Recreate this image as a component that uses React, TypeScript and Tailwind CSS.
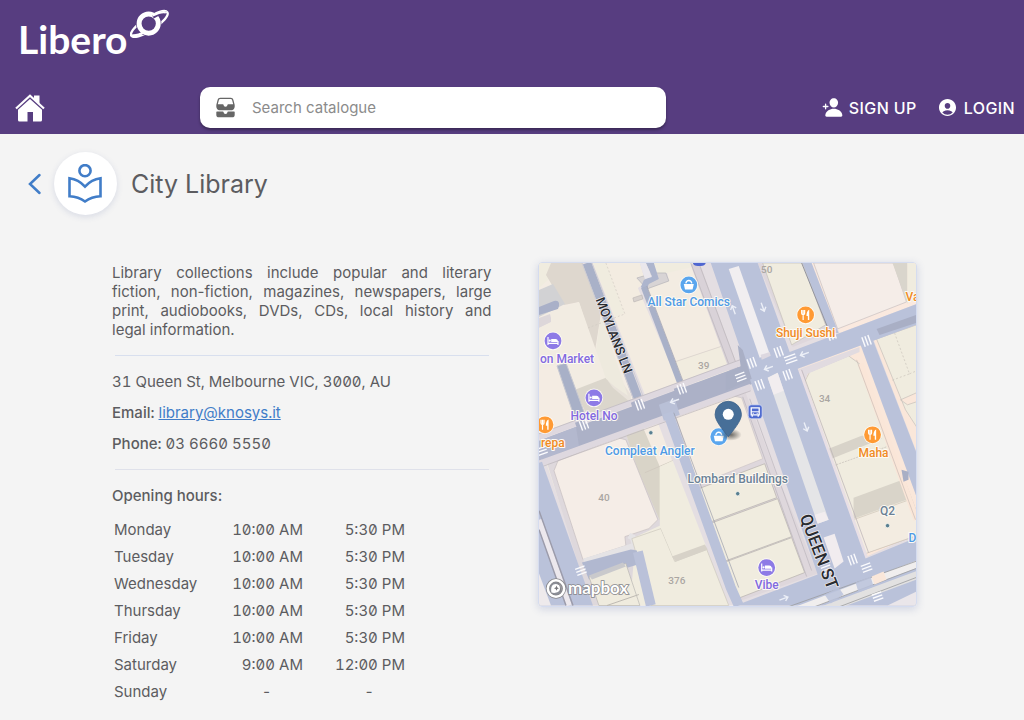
import type { ReactNode } from "react";
import { IoFileTrayStacked, IoPersonAdd, IoPersonCircle } from "react-icons/io5";

const hours: [string, string, string][] = [
  ["Monday", "10:00 AM", "5:30 PM"],
  ["Tuesday", "10:00 AM", "5:30 PM"],
  ["Wednesday", "10:00 AM", "5:30 PM"],
  ["Thursday", "10:00 AM", "5:30 PM"],
  ["Friday", "10:00 AM", "5:30 PM"],
  ["Saturday", "9:00 AM", "12:00 PM"],
  ["Sunday", "-", "-"],
];

function Logo() {
  return (
    <a href="#home" aria-label="Libero" className="flex w-fit items-start gap-[2px] text-white">
      <span className="pt-4 font-['Lato',sans-serif] text-[39px] font-bold leading-[46px]">Libero</span>
      <svg viewBox="130 9 40 29" className="mt-[9px] h-[29px] w-10" fill="none" stroke="white">
        <ellipse cx="149.300" cy="24" rx="21.500" ry="6.500" strokeWidth="2.400" transform="rotate(-33 149.300 24)" />
        <circle cx="148.700" cy="23.600" r="9.800" fill="#573d80" stroke="#573d80" strokeWidth="5.800" />
        <circle cx="148.700" cy="23.600" r="9.600" strokeWidth="4.900" />
        <path d="M153 17C158.500 14 163 12.300 166 12.700" stroke="#573d80" strokeWidth="3.400" />
        <path d="M152.500 15.500C158 12.800 163 11.400 166 12.400" strokeWidth="2.200" />
        <path d="M145 31.800C139.500 34.600 135 35.900 132 35.300" strokeWidth="2.200" />
      </svg>
    </a>
  );
}

function HomeIcon() {
  return (
    <svg viewBox="0 0 30 28" className="h-7 w-[30px]">
      <path d="M1 14.500L15 1.800L29 14.500" fill="none" stroke="white" strokeWidth="2.200" />
      <path d="M19 1.500H24.500V10L19 5.500Z" fill="white" />
      <path d="M15 5L27 15.800V26Q27 27.500 25.500 27.500H18V18H12.500V27.500H4.500Q3 27.500 3 26V15.800Z" fill="white" />
    </svg>
  );
}

function LibraryIcon() {
  return (
    <svg viewBox="0 0 34 40" className="h-10 w-[34px]" fill="none" stroke="#417dc8" strokeWidth="2.600">
      <circle cx="17" cy="6.700" r="5.600" />
      <path d="M1.500 14.300Q10.500 15.500 17 22.600Q23.500 15.500 32.500 14.300V32.300Q23.500 32.700 17 37.500Q10.500 32.700 1.500 32.300Z" />
    </svg>
  );
}

function Crossing({ x, y, angle = 20, length = 10 }: { x: number; y: number; angle?: number; length?: number }) {
  return (
    <g transform={`translate(${x} ${y}) rotate(${-angle})`} stroke="#fbfbfd" strokeWidth="1.400">
      {[-3.2, 0, 3.2].map((d) => (
        <path key={d} d={`M${d} ${-length / 2}V${length / 2}`} />
      ))}
    </g>
  );
}

function Arrow({ x, y, angle }: { x: number; y: number; angle: number }) {
  return (
    <path
      transform={`translate(${x} ${y}) rotate(${angle})`}
      d="M-4.500 0H4M1 -3L4.500 0L1 3"
      fill="none"
      stroke="#eceff7"
      strokeWidth="1.400"
    />
  );
}

type Kind = "bed" | "food" | "shop";
const kindColor: Record<Kind, string> = { bed: "#8d7ae6", food: "#ff9a33", shop: "#5aa6ee" };

function Poi({ x, y, kind }: { x: number; y: number; kind: Kind }) {
  const glyphs: Record<Kind, ReactNode> = {
    bed: (
      <>
        <path d="M-5 -4V4M-5 2.500H5M5 4V0" fill="none" stroke="white" strokeWidth="1.200" />
        <path d="M-1.800 1.200V-2H2.500Q5 -2 5 1.200Z" fill="white" />
        <circle cx="-3.200" cy="-0.300" r="1.100" fill="white" />
      </>
    ),
    food: (
      <>
        <path d="M-4 -5V-1.800Q-4 -0.300 -2.500 -0.300Q-1 -0.300 -1 -1.800V-5M-2.500 -5V5" fill="none" stroke="white" strokeWidth="1.200" />
        <path d="M3.600 5H2.200V1H0.800Q0.800 -4 3.600 -5.200Z" fill="white" />
      </>
    ),
    shop: (
      <>
        <path d="M-5 -1H5L3.800 4.500H-3.800Z" fill="white" />
        <path d="M-3 -1.500Q-2.500 -4.500 0 -4.500Q2.500 -4.500 3 -1.500" fill="none" stroke="white" strokeWidth="1.300" />
      </>
    ),
  };
  return (
    <g transform={`translate(${x} ${y})`}>
      <circle r="9.300" fill="#fffdf8" opacity="0.850" />
      <circle r="8.400" fill={kindColor[kind]} />
      {glyphs[kind]}
    </g>
  );
}

function Label({ x, y, color, children, start = false }: { x: number; y: number; color: string; children: string; start?: boolean }) {
  return (
    <text x={x} y={y} fill={color} textAnchor={start ? "start" : "middle"} stroke="#fdfaf4" strokeWidth="2" strokeLinejoin="round" paintOrder="stroke" fontSize="12" fontWeight="500">
      {children}
    </text>
  );
}

function StreetMap() {
  return (
    <svg viewBox="538 263 378 343" role="img" aria-label="Map of 31 Queen Street" className="block w-full font-['Roboto',sans-serif]">
      <defs>
        <radialGradient id="pinShade">
          <stop offset="0" stopColor="#30302e" stopOpacity="0.700" />
          <stop offset="1" stopColor="#30302e" stopOpacity="0" />
        </radialGradient>
      </defs>
      <rect x="538" y="263" width="378" height="343" fill="#e4dee2" />

      {/* north-west block */}
      <path d="M538 263H582L633 403L538 437Z" fill="#f3ece3" />
      <path d="M538 263H550L547 280L538 288Z" fill="#f0ecdf" />
      <path d="M550 263H582L600 314L594 351L578 302L563 305L545 275Z" fill="#ded7ce" />
      <path d="M538 290L552 284L564 304L538 317Z" fill="#d2d2d4" />
      <path d="M538 307L553 301Q559 300 558 306L557 309L538 315Z" fill="#a9b0c8" />
      <path d="M538 318L549 314L551 322L538 328Z" fill="#ddd7da" />
      <path d="M578 302L595 350L605 379L574 390L562 365L538 369V328L550 322V312Z" fill="#f2ece2" />
      <path d="M574 390L605 378L633 403L588 420Z" fill="#dbd6cc" />
      <path d="M607 381Q616 377 621 382L630 395V403L612 388Z" fill="#e8e2da" />
      <path d="M605 379L614 387L627 396L600 315L595 350Z" fill="#eeeade" />
      <path d="M538 370L557 364L574 425L550 434L538 430Z" fill="#f4ece3" />
      <path d="M556 366L565 363L586 420L576 425Z" fill="#a8b0c7" stroke="#c8c9d1" />

      {/* north block between the lanes */}
      <path d="M592 263H639L645 283L637 288L679 387L646 400Z" fill="#f3ece1" />
      <path d="M592 263H605L623 313L614 317Z" fill="#f0ecdf" />
      <path d="M605 263L624 314L587 328" fill="none" stroke="#d2ccc4" strokeWidth="0.700" strokeDasharray="2 2" />
      <path d="M610 314L615 324L613 330L609 318Z" fill="#d6d1cd" />
      <path d="M653 263H694L735 378L684 384L645 287L668 280L666 272L657 275Z" fill="#f3ece2" />
      <path d="M653 263H694L696 266L657 275Z" fill="#f0ecdf" />
      <path d="M674 362L725 345L735 365L682 386Z" fill="#f1ecdf" stroke="#d5cdc8" strokeWidth="0.700" />
      <path d="M636 278L653 273L665 273L668 281L646 289Z" fill="#d8d4d5" stroke="#b5b4b9" strokeWidth="0.700" />
      <path d="M632 298L641 295L642 299L633 302Z" fill="#d8d2ce" stroke="#b9b3b2" strokeWidth="0.600" />
      <path d="M645 263H653L658 279L648 284L645 291L640 287L643 280L651 276Z" fill="#adb5cd" />
      <path d="M639 263H645L651 277L644 279Z" fill="#eae7ec" />
      <path d="M643 287L682 390" stroke="#a9b1c8" strokeWidth="6" />
      <path d="M646 286L684 386" stroke="#9d9faf" strokeWidth="0.700" />
      <path d="M586 263L639 404" stroke="#a9b1c8" strokeWidth="9" />
      <path d="M581 263L634 403M591 263L644 401" stroke="#cfcdd3" strokeWidth="1" />
      <path d="M694 263L734 372" stroke="#d9d2d8" strokeWidth="9" />
      <path d="M690 263L728 364M698 263L737 368" stroke="#bbb5ba" strokeWidth="0.700" />

      {/* central block and the ones to its west */}
      <path d="M545 462L624 437L659 430L727 606H592Z" fill="#f0ecdf" />
      <path d="M546 463L625 435L639 464L661 525L635 537L629 606H590Z" fill="#ded8dc" />
      <path d="M624 431L641 425L659 462V521L637 470Z" fill="#d9d4c8" />
      <path d="M641 425L656 420L671 460L659 467Z" fill="#f4ece2" />
      <path d="M644 473L672 461" stroke="#cfc8be" strokeWidth="0.800" />
      <path d="M557 461L617 438L625 440L637 470L657 520L648 529L624 537L625 546L582 560L553 471Z" fill="#f5ede7" stroke="#cac3c4" strokeWidth="0.800" />
      <path d="M583 562L634 546L632 538L628 536" fill="none" stroke="#e5e3e5" strokeWidth="6" />
      <path d="M631 539L660 529L674 562L706 550L728 606H650Z" fill="#f0ecdf" stroke="#cdc8be" strokeWidth="0.700" />
      <path d="M659 467L672 461L705 546L672 557L659 526Z" fill="#f0ecdf" />
      <path d="M671 557L704 545L707 550L675 562Z" fill="#d7d2c8" />
      <path d="M581 563L630 550L636 551L637 565L588 580Z" fill="#b1b8d0" />
      <path d="M637 552L650 606" stroke="#bac1d9" strokeWidth="10" />
      <path d="M588 577L625 564L639 606H598Z" fill="#efebde" stroke="#bab7b3" strokeWidth="0.700" />
      <path d="M588 576L622 563L625 567L591 580Z" fill="#c9c9cc" />
      <path d="M606 606L638 595" stroke="#bdb9b2" />

      <path d="M675 414L743 388L769 457L817 574L735 603Z" fill="#ded7dc" />
      <path d="M675 417L732 396L741 398L762 459L697 485Z" fill="#f4ece2" stroke="#cdc5c7" strokeWidth="0.700" />
      <path d="M698 489L764 464L776 498L708 523Z" fill="#f0ecdf" stroke="#bcb7b2" strokeWidth="0.800" />
      <path d="M709 524L777 499L791 537L723 562Z" fill="#f0ecdf" stroke="#bcb7b2" strokeWidth="0.800" />
      <path d="M723 563L791 538L804 573L737 599Z" fill="#f0ecdf" stroke="#bcb7b2" strokeWidth="0.800" />
      <path d="M742 397L806 577M749 399L811 571" stroke="#bcb5bd" strokeWidth="0.700" />

      {/* east blocks */}
      <path d="M757 263H804L833 331L792 347Z" fill="#ded7dc" />
      <path d="M762 263H802L825 325L791 345Z" fill="#f0ecdf" stroke="#c4bfb9" strokeWidth="0.700" />
      <path d="M809 263H916V304L839 333Z" fill="#fae9df" />
      <path d="M813 263H893L906 302L837 329Z" fill="#f5ede8" stroke="#c8c0bf" strokeWidth="0.700" />
      <path d="M892 263H907V304Z" fill="#d9d5cc" />
      <path d="M907 263H916V300L907 303Z" fill="#f0ecdf" />
      <path d="M796 370L861 345L895 435L927 529L864 558Z" fill="#fae7da" />
      <path d="M804 382L864 554L916 536V512L881 420L859 364L848 356L809 372Z" fill="#f0ecdf" stroke="#c4beb8" strokeWidth="0.700" />
      <path d="M797 370L859 347V352L807 374L804 382Z" fill="#e1dbe0" />
      <path d="M828 449L861 436L879 436L881 439L831 459Z" fill="#d8d3c9" />
      <path d="M833 466L889 446" stroke="#cac4bc" strokeWidth="0.800" strokeDasharray="2 1" />
      <path d="M853 498L902 480L909 499L853 519Z" fill="#d9d4c9" />
      <path d="M853 520L909 500L916 519V536L865 554Z" fill="#f3ece1" stroke="#cfc5b8" strokeWidth="0.700" />
      <path d="M798 371L865 558" stroke="#e8dfe5" strokeWidth="5" />
      <path d="M801 370L868 553" stroke="#b8b0b5" strokeWidth="0.700" />
      <path d="M860 364L916 520" stroke="#fae6d8" strokeWidth="6" />
      <path d="M856 360L915 520" stroke="#c9bdb6" strokeWidth="0.700" />
      <path d="M872 337L916 321V452Z" fill="#fae7da" />
      <path d="M876 339L916 325V393L900 400L907 405L916 402V427L905 410Z" fill="#f0ecdf" stroke="#c5bfba" strokeWidth="0.700" />
      <path d="M894 333L909 374L890 381M909 374L916 371" fill="none" stroke="#cac4bc" strokeWidth="0.700" strokeDasharray="2 2" />
      <path d="M802 263H811L838 333H829Z" fill="#bac2da" />
      <path d="M801 263L828 330" stroke="#92949f" strokeWidth="1" />

      {/* streets */}
      <path d="M541 440L752 362V384L541 461Z" fill="#acb1c7" />
      <path d="M538 441L575 427L578 446L538 461Z" fill="#b3b8ce" />
      <path d="M538 437L750 359M538 464L750 387" fill="none" stroke="#ded8df" strokeWidth="6" />
      <path d="M538 434L750 356M538 468L750 391" fill="none" stroke="#bcb6bc" strokeWidth="0.700" />
      <path d="M630 403L639 399L643 409L633 413ZM673 389L681 386L684 393L675 397ZM574 423L583 420L586 431L578 434Z" fill="#acb1c7" />
      <path d="M658 405L674 399L679 415L663 421Z" fill="#b9c0d7" />
      <path d="M667 413L730 588L738 606" fill="none" stroke="#bac2da" strokeWidth="10" />
      <path d="M673 413L738 588" stroke="#9c9fac" strokeWidth="0.700" />
      <path d="M710 263H757L789 352L916 304V325L797 369L865 559L916 538V606H735L817 575L750 382L740 350Z" fill="#bac2da" />
      <path d="M876 329L916 315V323L879 335Z" fill="#a9afc5" />
      <path d="M737 345L742 350L751 379L725 391V373L740 367Z" fill="#a9afc5" />
      <path d="M860 345L872 339L916 453V497Z" fill="#bac2da" />
      <path d="M901 470L908 472V480L903 482Z" fill="#a9afc5" />
      <path d="M538 463L541 462L592 606H538Z" fill="#bac2da" />
      <path d="M538 520L568 606" stroke="#ece8ed" strokeWidth="6" />
      <path d="M538 511L572 606M538 530L565 606" stroke="#9c9cab" strokeWidth="1.500" />
      <path d="M538 574L550 606H538Z" fill="#eeeaec" />

      {/* median strips and tram tracks */}
      <path d="M728 269L738 266L769 354L759 358Z" fill="#f1eef0" />
      <path d="M760 355L769 352L770 356L761 360Z" fill="#ddd8e0" />
      <path d="M767 378L777 373L828 520L817 524Z" fill="#e5e5e7" />
      <path d="M767 378L777 373L783 391L773 395ZM814 515L824 512L828 520L817 524Z" fill="#f2edef" />
      <path d="M823 538L834 534L843 562L834 569Z" fill="#f1ecef" />
      <path d="M779 617L926 561" stroke="#f0eeee" strokeWidth="7" />
      <path d="M805 617L926 572" stroke="#e2e1e1" strokeWidth="8" />
      <path d="M780 610L926 558M780 620L926 565M800 622L926 574" stroke="#9b9c9e" strokeWidth="0.800" />
      <path d="M824 595L838 588L843 595L830 604ZM855 583L870 577L873 587L858 593Z" fill="#bac2da" opacity="0.850" />
      <path d="M871 577L883 572L886 580L874 585Z" fill="#fae7da" />
      <path d="M887 606L916 592V606Z" fill="#eae6ea" />

      <Crossing x={639} y={405} />
      <Crossing x={681} y={389} />
      <Crossing x={583} y={425} />
      <Crossing x={751} y={363} />
      <Crossing x={778} y={352} />
      <Crossing x={759} y={385} />
      <Crossing x={787} y={375} />
      <Crossing x={866} y={341} />
      <Crossing x={831} y={335} />
      <Crossing x={790} y={359} angle={110} length={12} />
      <Crossing x={740} y={377} angle={110} />
      <Crossing x={852} y={560} />
      <Crossing x={866} y={568} angle={110} />
      <Crossing x={877} y={597} angle={110} />
      <Crossing x={580} y={571} angle={110} />
      <Crossing x={541} y={451} angle={110} />
      <Crossing x={826} y={570} angle={110} />
      <Arrow x={762} y={307} angle={70} />
      <Arrow x={733} y={310} angle={250} />
      <Arrow x={805} y={427} angle={70} />
      <Arrow x={804} y={354} angle={160} />
      <Arrow x={768} y={368} angle={160} />
      <Arrow x={674} y={401} angle={160} />
      <Arrow x={783} y={599} angle={-20} />

      {/* house numbers */}
      <g fill="#aaa6a2" fontSize="10" fontWeight="500" textAnchor="middle">
        <text x="766" y="273">50</text>
        <text x="703" y="369">39</text>
        <text x="824" y="402">34</text>
        <text x="603" y="501">40</text>
        <text x="676" y="584">376</text>
      </g>
      <path d="M692 263H705Q704 266 700 266H697Q693 266 692 263Z" fill="#4f66d0" />

      {/* street names */}
      <g fill="#292b30" stroke="#eceaed" strokeWidth="1.500" paintOrder="stroke" fontWeight="500" textAnchor="middle">
        <text transform="translate(609 337) rotate(69)" fontSize="13">MOYLANS LN</text>
        <text transform="translate(813 554) rotate(69)" fontSize="17">QUEEN ST</text>
      </g>

      {/* places */}
      <Poi x={688} y={285} kind="shop" />
      <Label x={688} y={306} color="#4f9be6">All Star Comics</Label>
      <Poi x={805} y={315} kind="food" />
      <Label x={805} y={337} color="#f08a24">Shuji Sushi</Label>
      <Poi x={552} y={341} kind="bed" />
      <Label x={539} y={363} color="#826ae0" start>on Market</Label>
      <Poi x={593} y={398} kind="bed" />
      <Label x={593} y={420} color="#826ae0">Hotel No</Label>
      <Poi x={544} y={425} kind="food" />
      <Label x={540} y={447} color="#f08a24" start>repa</Label>
      <Label x={905} y={301} color="#f08a24" start>Va</Label>
      <Poi x={872} y={435} kind="food" />
      <Label x={873} y={457} color="#f08a24">Maha</Label>
      <Poi x={766} y={568} kind="bed" />
      <Label x={766} y={589} color="#826ae0">Vibe</Label>
      <Label x={649} y={455} color="#4f9be6">Compleat Angler</Label>
      <Label x={737} y={483} color="#6b8196">Lombard Buildings</Label>
      <Label x={887} y={515} color="#6b8196">Q2</Label>
      <Label x={908} y={542} color="#4f9be6" start>D</Label>
      <g fill="#587f91" stroke="#f9f6ef" strokeWidth="0.800">
        <circle cx="650" cy="433" r="2.200" />
        <circle cx="737" cy="494" r="2.200" />
        <circle cx="887" cy="526" r="2.200" />
      </g>
      <g transform="translate(754.500 412)">
        <rect x="-7" y="-7" width="14" height="14" rx="3" fill="#4f6bd0" stroke="#dfe5f5" strokeWidth="0.700" />
        <path d="M-4 -4H4V3H-4ZM-3 3V5M3 3V5" fill="none" stroke="white" strokeWidth="1.300" />
        <path d="M-4 0H4M-2.500 1.600H-1.500M1.500 1.600H2.500" stroke="white" />
      </g>

      {/* location pin */}
      <Poi x={718} y={437} kind="shop" />
      <ellipse cx="730" cy="435" rx="11" ry="6" fill="url(#pinShade)" />
      <path d="M727.500 401.500A13.200 13.200 0 0 1 740.700 414.700C740.700 421 733 430 727.500 437C722 430 714.300 421 714.300 414.700A13.200 13.200 0 0 1 727.500 401.500Z" fill="#476f98" stroke="#3c628a" strokeWidth="0.800" />
      <circle cx="727.500" cy="414.500" r="5.500" fill="white" />

      {/* attribution */}
      <circle cx="555" cy="589" r="8.200" fill="#77777b" fillOpacity="0.700" stroke="#87878b" strokeWidth="4" />
      <circle cx="555" cy="589" r="8.200" stroke="white" strokeWidth="2.500" fill="none" />
      <path d="M550.500 593C549.500 588 551 584.500 555 584.500A4.300 4.300 0 0 1 559 589C559 593 554 594 550.500 593Z" fill="white" />
      <path d="M555.500 586L556.300 588L558 588.700L556.300 589.400L555.500 591.200L554.700 589.400L553 588.700L554.700 588Z" fill="#77777b" />
      <text x="567" y="594" fontSize="17" fontWeight="700" fontFamily="Lato, sans-serif" fill="white" stroke="#87878b" strokeWidth="1.600" paintOrder="stroke">mapbox</text>
    </svg>
  );
}

export default function App() {
  return (
    <div className="min-h-screen bg-[#f4f4f4] font-['Inter',sans-serif] text-base text-[#5c5c60]">
      <header className="bg-[#573d80] pb-[6px] text-white">
        <div className="px-[18px] pb-[25px]">
          <Logo />
        </div>
        <div className="flex items-center pl-[15px] pr-[9px]">
          <a href="#home" aria-label="Home" className="w-[185px] flex-none">
            <HomeIcon />
          </a>
          <label className="flex h-[41px] flex-1 items-center rounded-[10px] bg-white shadow-[0_2px_3px_rgba(0,0,0,0.35)]">
            <IoFileTrayStacked className="ml-[15px] mr-4 size-[21px] flex-none text-[#666]" />
            <input
              type="search"
              aria-label="Search catalogue"
              placeholder="Search catalogue"
              className="min-w-0 flex-1 bg-transparent pt-[2px] text-[15px] text-[#444] outline-none placeholder:text-[#8b8b8b]"
            />
          </label>
          <nav className="flex w-[349px] flex-none items-center justify-end gap-5 text-base font-medium tracking-wide">
            <a href="#signup" className="flex items-center gap-[6px]">
              <IoPersonAdd className="size-[21px]" />
              SIGN UP
            </a>
            <a href="#login" className="flex items-center gap-[6px]">
              <IoPersonCircle className="size-[21px]" />
              LOGIN
            </a>
          </nav>
        </div>
      </header>

      <main>
        <div className="flex items-center pl-7 pt-[18px]">
          <button type="button" aria-label="Back" className="mr-[12px] flex-none">
            <svg viewBox="0 0 14 22" className="h-[22px] w-[14px]" fill="none" stroke="#417dc8" strokeWidth="2.500" strokeLinecap="round">
              <path d="M11.500 2L2 11L11.500 20" />
            </svg>
          </button>
          <div className="flex size-[63px] flex-none items-center justify-center rounded-full bg-white pr-[2px] shadow-[0_2px_6px_rgba(60,80,150,0.15)]">
            <LibraryIcon />
          </div>
          <h1 className="ml-[14px] text-[25px] leading-8">City Library</h1>
        </div>

        <div className="grid grid-cols-2 items-start gap-[46px] pb-5 pl-28 pr-[107px] pt-[47px]">
          <section className="pt-px text-[15px]">
            <p className="text-justify leading-[19px]">
              Library collections include popular and literary fiction, non-fiction, magazines, newspapers, large print,
              audiobooks, DVDs, CDs, local history and legal{"\u00a0"}information.
            </p>
            <hr className="mx-[3px] my-4 border-[#d8dfee]" />
            <div className="space-y-3 leading-[19px] slashed-zero tabular-nums">
              <p>31 Queen St, Melbourne VIC, 3000, AU</p>
              <p>
                <strong className="font-medium">Email:</strong>{" "}
                <a href="mailto:library@knosys.it" className="text-[#417dc8] underline">library@knosys.it</a>
              </p>
              <p>
                <strong className="font-medium">Phone:</strong> 03 6660 5550
              </p>
            </div>
            <hr className="mx-[3px] my-4 border-[#dfe1ea]" />
            <h2 className="font-medium leading-[19px]">Opening hours:</h2>
            <table className="mt-3 slashed-zero tabular-nums">
              <tbody>
                {hours.map(([day, open, close]) => (
                  <tr key={day} className="h-[27px]">
                    <th scope="row" className="w-[109px] pl-[2px] text-left font-normal">{day}</th>
                    <td className={open === "-" ? "w-[82px] pl-[9px] text-center" : "w-[82px] text-right"}>{open}</td>
                    <td className={close === "-" ? "w-[102px] pl-[30px] text-center" : "w-[102px] text-right"}>{close}</td>
                  </tr>
                ))}
              </tbody>
            </table>
          </section>
          <section className="overflow-hidden rounded border border-[#d5dcef] shadow-[0_2px_8px_rgba(60,80,150,0.2)]">
            <StreetMap />
          </section>
        </div>
      </main>
    </div>
  );
}
